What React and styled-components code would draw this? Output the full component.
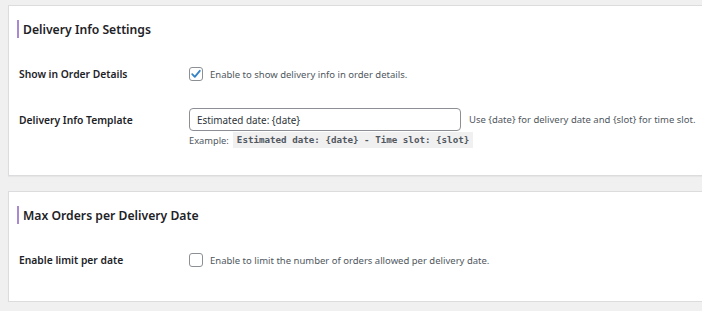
import React from "react";
import styled, { createGlobalStyle } from "styled-components";

const GlobalStyle = createGlobalStyle`
  body {
    margin: 0;
    background: #f0f0f1;
    font-family: "Noto Sans", "Open Sans", sans-serif;
    color: #1d2327;
  }
`;

function CheckMark() {
  return (
    <svg width="12" height="12" viewBox="0 0 12 12">
      <path d="M2.2 6.2 L4.8 8.8 L9.8 2.8" fill="none" stroke="#3582c4" strokeWidth="1.8" strokeLinecap="round" strokeLinejoin="round" />
    </svg>
  );
}

function App() {
  return (
    <>
      <GlobalStyle />
      <Page>
        <Card $top={5} $height={171}>
          <SectionTitle>Delivery Info Settings</SectionTitle>
          <Row $top={29}>
            <Label>Show in Order Details</Label>
            <Field>
              <CheckBox $checked>
                <CheckMark />
              </CheckBox>
              <Description>Enable to show delivery info in order details.</Description>
            </Field>
          </Row>
          <Row $top={27} $align="flex-start">
            <Label $pad={5}>Delivery Info Template</Label>
            <FieldColumn>
              <Field $gap={8}>
                <TextInput readOnly value="Estimated date: {date}" />
                <Description>Use {"{date}"} for delivery date and {"{slot}"} for time slot.</Description>
              </Field>
              <Example>
                Example: <Code>Estimated date: {"{date}"} - Time slot: {"{slot}"}</Code>
              </Example>
            </FieldColumn>
          </Row>
        </Card>
        <Card $top={15} $height={111}>
          <SectionTitle>Max Orders per Delivery Date</SectionTitle>
          <Row $top={29}>
            <Label>Enable limit per date</Label>
            <Field>
              <CheckBox />
              <Description>Enable to limit the number of orders allowed per delivery date.</Description>
            </Field>
          </Row>
        </Card>
      </Page>
    </>
  );
}

const Page = styled.div`
  display: flex;
  flex-direction: column;
  padding-left: 8px;
  width: 760px;
`;

const Card = styled.section`
  margin-top: ${(p) => p.$top}px;
  height: ${(p) => p.$height}px;
  box-sizing: border-box;
  background: #fff;
  border: 1px solid #dcdcde;
  box-shadow: 0 1px 1px rgba(0, 0, 0, 0.04);
  padding: 14px 8px 0 8px;
`;

const SectionTitle = styled.h2`
  margin: 0;
  height: 18px;
  display: flex;
  align-items: center;
  border-left: 2px solid #a98ad0;
  padding-left: 4px;
  font-size: 12.2px;
  font-weight: 600;
  color: #1d2327;
`;

const Row = styled.div`
  display: grid;
  grid-template-columns: 170px 1fr;
  align-items: ${(p) => p.$align || "center"};
  margin-top: ${(p) => p.$top}px;
  padding-left: 2px;
`;

const Label = styled.div`
  font-size: 10.3px;
  font-weight: 600;
  color: #1d2327;
  padding-top: ${(p) => p.$pad || 0}px;
`;

const Field = styled.div`
  display: flex;
  align-items: center;
  gap: ${(p) => p.$gap || 7}px;
`;

const FieldColumn = styled.div`
  display: flex;
  flex-direction: column;
`;

const CheckBox = styled.span`
  width: 14px;
  height: 14px;
  box-sizing: border-box;
  border: 1px solid #8c8f94;
  border-radius: 3px;
  background: #fff;
  display: flex;
  align-items: center;
  justify-content: center;
`;

const Description = styled.span`
  font-size: 9.5px;
  color: #50575e;
`;

const TextInput = styled.input`
  width: 272px;
  height: 23px;
  box-sizing: border-box;
  border: 1px solid #8c8f94;
  border-radius: 4px;
  padding: 0 7px;
  font-family: "Noto Sans", "Open Sans", sans-serif;
  font-size: 9.9px;
  color: #2c3338;
  background: #fff;
  outline: none;
`;

const Example = styled.div`
  margin-top: 1px;
  font-size: 9.3px;
  color: #50575e;
  display: flex;
  align-items: center;
  gap: 4px;
`;

const Code = styled.code`
  font-family: "DejaVu Sans Mono", "Liberation Mono", monospace;
  font-size: 9.2px;
  font-weight: 600;
  color: #50575e;
  background: #f0f0f1;
  padding: 3px 4px;
  line-height: 10px;
`;

export default App;
